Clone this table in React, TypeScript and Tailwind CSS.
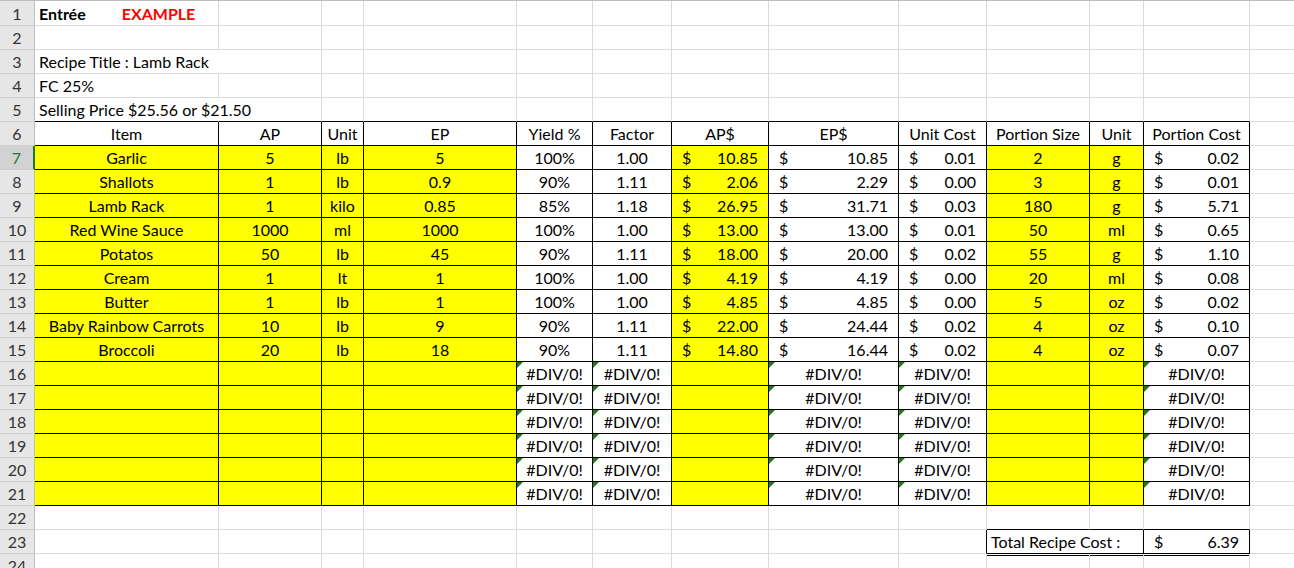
import React from 'react';

const WC = [
  'w-[184px]', 'w-[103px]', 'w-[42px]', 'w-[153px]', 'w-[76px]', 'w-[79px]',
  'w-[97px]', 'w-[130px]', 'w-[88px]', 'w-[103px]', 'w-[54px]', 'w-[106px]',
];

type CellProps = {
  w: string;
  r?: 'g' | 'k' | 'n';
  b?: 'g' | 'k';
  bg?: string;
  align?: 'l' | 'c' | 'acct';
  children?: React.ReactNode;
  extra?: string;
  tri?: boolean;
};

function Cell({ w, r = 'g', b = 'g', bg = 'bg-white', align = 'c', children, extra = '', tri }: CellProps) {
  const rc = r === 'k' ? 'border-r-black' : r === 'n' ? 'border-r-transparent' : 'border-r-[#dadada]';
  const bc = b === 'k' ? 'border-b-black' : 'border-b-[#dadada]';
  const al = align === 'l' ? 'justify-start pl-[4px]' : align === 'acct' ? 'justify-between pl-[10px] pr-[10px]' : 'justify-center';
  return (
    <div
      className={`${tri ? 'relative' : ''} shrink-0 h-full flex items-end pb-[2px] border-r border-b whitespace-nowrap ${w} ${rc} ${bc} ${bg} ${al} ${extra}`}
    >
      {tri && (
        <span className="absolute left-0 top-0 w-0 h-0 border-t-[6px] border-t-[#1f7a1f] border-r-[6px] border-r-transparent" />
      )}
      {children}
    </div>
  );
}

function Row({ n, tall, active, children }: { n: number; tall?: boolean; active?: boolean; children?: React.ReactNode }) {
  return (
    <div className={`flex ${tall ? 'h-[25px]' : 'h-[24px]'}`}>
      <div
        className={`shrink-0 w-[35px] h-full flex items-end justify-center pb-[2px] border-b border-b-[#cfcfcf] ${
          active ? 'border-r-2 border-r-[#217346] bg-[#d2d2d2] text-[#217346]' : 'border-r border-r-[#bdbdbd] bg-[#e6e6e6] text-[#333333]'
        }`}
      >
        {n}
      </div>
      {children}
      <div className="flex-1 h-full border-b border-b-[#dadada]" />
    </div>
  );
}

const headers = ['Item', 'AP', 'Unit', 'EP', 'Yield %', 'Factor', 'AP$', 'EP$', 'Unit Cost', 'Portion Size', 'Unit', 'Portion Cost'];

const items: string[][] = [
  ['Garlic', '5', 'lb', '5', '100%', '1.00', '10.85', '10.85', '0.01', '2', 'g', '0.02'],
  ['Shallots', '1', 'lb', '0.9', '90%', '1.11', '2.06', '2.29', '0.00', '3', 'g', '0.01'],
  ['Lamb Rack', '1', 'kilo', '0.85', '85%', '1.18', '26.95', '31.71', '0.03', '180', 'g', '5.71'],
  ['Red Wine Sauce', '1000', 'ml', '1000', '100%', '1.00', '13.00', '13.00', '0.01', '50', 'ml', '0.65'],
  ['Potatos', '50', 'lb', '45', '90%', '1.11', '18.00', '20.00', '0.02', '55', 'g', '1.10'],
  ['Cream', '1', 'lt', '1', '100%', '1.00', '4.19', '4.19', '0.00', '20', 'ml', '0.08'],
  ['Butter', '1', 'lb', '1', '100%', '1.00', '4.85', '4.85', '0.00', '5', 'oz', '0.02'],
  ['Baby Rainbow Carrots', '10', 'lb', '9', '90%', '1.11', '22.00', '24.44', '0.02', '4', 'oz', '0.10'],
  ['Broccoli', '20', 'lb', '18', '90%', '1.11', '14.80', '16.44', '0.02', '4', 'oz', '0.07'],
];

const YELLOW = [true, true, true, true, false, false, true, false, false, true, true, false];
const ACCT = [false, false, false, false, false, false, true, true, true, false, false, true];
const DIV = [false, false, false, false, true, true, false, true, true, false, false, true];

function Acct({ v }: { v: string }) {
  return (
    <>
      <span>$</span>
      <span>{v}</span>
    </>
  );
}

function PlainRow({ n, active }: { n: number; active?: boolean }) {
  return (
    <Row n={n} active={active}>
      {WC.map((w, i) => (
        <Cell key={i} w={w} />
      ))}
    </Row>
  );
}

export default function App() {
  return (
    <div className="h-[568px] w-[1294px] overflow-hidden bg-white font-['Lato',sans-serif] text-[16px] leading-[19px] text-black">
      <div className="h-[1px] bg-[#bdbdbd]" />
      {/* Row 1 */}
      <Row n={1} tall>
        <Cell w={WC[0]} align="l">
          <span className="font-bold">Entrée</span>
          <span className="ml-[36px] font-bold text-[#ff0000]">EXAMPLE</span>
        </Cell>
        {WC.slice(1).map((w, i) => (
          <Cell key={i} w={w} />
        ))}
      </Row>
      <PlainRow n={2} />
      {/* Row 3 */}
      <Row n={3}>
        <Cell w={WC[0]} align="l" r="n" extra="relative z-10">
          Recipe Title : Lamb Rack
        </Cell>
        {WC.slice(1).map((w, i) => (
          <Cell key={i} w={w} />
        ))}
      </Row>
      {/* Row 4 */}
      <Row n={4}>
        <Cell w={WC[0]} align="l">
          FC 25%
        </Cell>
        {WC.slice(1).map((w, i) => (
          <Cell key={i} w={w} />
        ))}
      </Row>
      {/* Row 5 */}
      <Row n={5}>
        <Cell w={WC[0]} align="l" r="n" b="k" extra="relative z-10">
          Selling Price $25.56 or $21.50
        </Cell>
        {WC.slice(1).map((w, i) => (
          <Cell key={i} w={w} b="k" />
        ))}
      </Row>
      {/* Row 6 headers */}
      <Row n={6}>
        {WC.map((w, i) => (
          <Cell key={i} w={w} r="k" b="k">
            {headers[i]}
          </Cell>
        ))}
      </Row>
      {/* Rows 7-15 */}
      {items.map((row, ri) => (
        <Row key={ri} n={7 + ri} active={ri === 0}>
          {WC.map((w, i) => (
            <Cell
              key={i}
              w={w}
              r="k"
              b="k"
              bg={YELLOW[i] ? 'bg-[#ffff00]' : 'bg-white'}
              align={ACCT[i] ? 'acct' : 'c'}
            >
              {ACCT[i] ? <Acct v={row[i]} /> : row[i]}
            </Cell>
          ))}
        </Row>
      ))}
      {/* Rows 16-21 */}
      {[16, 17, 18, 19, 20, 21].map((n) => (
        <Row key={n} n={n}>
          {WC.map((w, i) => (
            <Cell key={i} w={w} r="k" b="k" bg={YELLOW[i] ? 'bg-[#ffff00]' : 'bg-white'} tri={DIV[i]}>
              {DIV[i] ? '#DIV/0!' : null}
            </Cell>
          ))}
        </Row>
      ))}
      {/* Row 22 */}
      <Row n={22}>
        {WC.map((w, i) => (
          <Cell key={i} w={w} b={i >= 9 ? 'k' : 'g'} />
        ))}
      </Row>
      {/* Row 23 */}
      <Row n={23}>
        {WC.slice(0, 8).map((w, i) => (
          <Cell key={i} w={w} />
        ))}
        <Cell w={WC[8]} r="k" />
        <Cell w="w-[157px]" r="k" b="k" align="l">
          Total Recipe Cost :
        </Cell>
        <Cell w={WC[11]} r="k" b="k" align="acct">
          <Acct v="6.39" />
        </Cell>
      </Row>
      {/* Row 24 */}
      <Row n={24}>
        {WC.map((w, i) => (
          <Cell key={i} w={w} extra={i >= 9 ? 'shadow-[inset_0_1px_0_#ffffff,inset_0_2px_0_#000000]' : ''} />
        ))}
      </Row>
    </div>
  );
}
